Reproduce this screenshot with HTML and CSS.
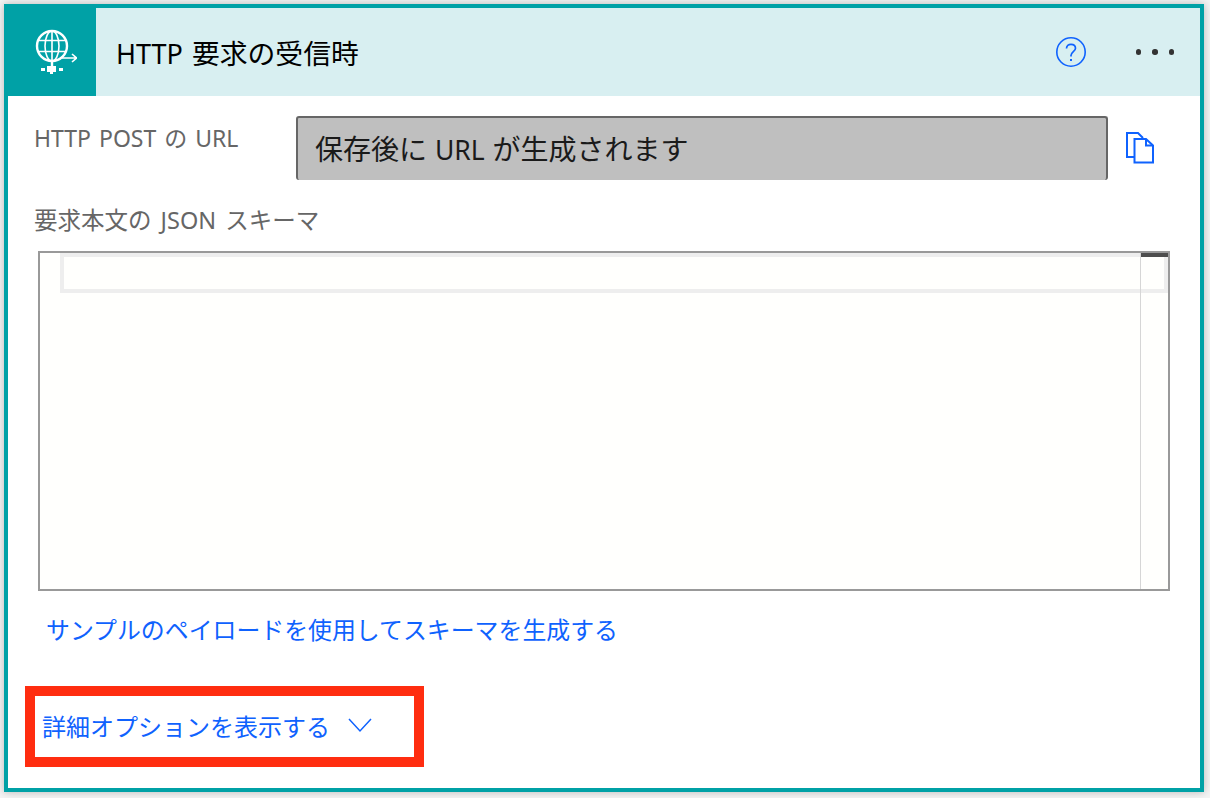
FILE: index.html
```html
<!DOCTYPE html>
<html lang="ja">

<head>
    <meta charset="UTF-8">
    <title>HTTP 要求の受信時</title>
    <link rel="stylesheet" href="styles.css">
</head>

<body>
    <div class="card">
        <div class="card-header">
            <div class="trigger-icon">
                <svg width="50" height="46" viewBox="0 0 50 46" fill="none" stroke="#fff">
                    <circle cx="25" cy="17" r="15" stroke-width="2.4" />
                    <ellipse cx="25" cy="17" rx="7" ry="15" stroke-width="1.6" />
                    <path d="M25 2V32M11 11.500H39M11 22.500H39" stroke-width="1.6" />
                    <path d="M25 32V38" stroke-width="2.4" />
                    <path d="M35 29H49M45 25L49.500 29L45 33" stroke-width="1.6" />
                    <rect x="20" y="37" width="9" height="6" fill="#fff" stroke="none" />
                    <rect x="14" y="39" width="4" height="3" fill="#fff" stroke="none" />
                    <rect x="32" y="39" width="4" height="3" fill="#fff" stroke="none" />
                    <rect x="23" y="43" width="3" height="2" fill="#fff" stroke="none" />
                </svg>
            </div>
            <div class="card-title">HTTP <span class="ja">要求の受信時</span></div>
            <svg class="help-icon" width="32" height="32" viewBox="0 0 32 32" fill="none">
                <circle cx="16" cy="16" r="14.2" stroke="#0f62fe" stroke-width="1.6" />
                <path d="M11.5 12.5C11.5 9.8 13.5 8.3 16 8.3C18.6 8.3 20.5 9.9 20.5 12.2C20.5 15.6 16 15.8 16 19.6V20.5" stroke="#0f62fe" stroke-width="1.7" />
                <rect x="15" y="23" width="2" height="2" fill="#0f62fe" />
            </svg>
            <div class="more-dots"><span></span><span></span><span></span></div>
        </div>

        <div class="card-body">
            <div class="url-row">
                <div class="field-label url-label">HTTP POST の URL</div>
                <div class="url-box"><span class="ja">保存後に</span> URL <span class="ja">が生成されます</span></div>
                <svg class="copy-icon" width="30" height="34" viewBox="0 0 30 34" fill="none" stroke="#0f62fe" stroke-width="2">
                    <path d="M9 26H2V2H13L18 7" />
                    <path d="M9.500 8H21L28 14.500V31.500H9.500Z" />
                    <path d="M21 8V14.500H28" />
                </svg>
            </div>

            <div class="field-label schema-label">要求本文の JSON スキーマ</div>

            <div class="editor">
                <div class="editor-line"></div>
                <div class="editor-ruler"></div>
                <div class="editor-thumb"></div>
            </div>

            <a class="sample-link">サンプルのペイロードを使用してスキーマを生成する</a>

            <div class="advanced-box">
                <span class="advanced-text">詳細オプションを表示する</span>
                <svg width="24" height="15" viewBox="0 0 24 15" fill="none" stroke="#0f62fe" stroke-width="1.500">
                    <path d="M1 1L12 13L23 1" />
                </svg>
            </div>
        </div>
    </div>
</body>

</html>
```

FILE: styles.css
```css
* {
    box-sizing: border-box;
}

body {
    margin: 0;
    width: 1210px;
    height: 798px;
    overflow: hidden;
    padding: 4px 6px 6px 4px;
    background-color: #f4f4f4;
    font-family: "Noto Sans", "Noto Sans CJK JP", sans-serif;
}

.card {
    width: 1200px;
    height: 788px;
    border: 4px solid #00a1a6;
    background-color: #ffffff;
    box-shadow: 0 0 8px rgba(0, 0, 0, 0.25);
}

.card-header {
    display: flex;
    align-items: center;
    height: 88px;
    background-color: #d8eff1;
}

.trigger-icon {
    display: flex;
    align-items: center;
    justify-content: center;
    width: 88px;
    height: 88px;
    background-color: #00a1a6;
}

.card-title {
    flex: 1;
    margin-left: 20px;
    font-size: 27px;
    word-spacing: 2px;
    color: #000000;
}

.card-title .ja {
    font-size: 27.800px;
}

.help-icon {
    margin-right: 49px;
}

.more-dots {
    display: flex;
    gap: 11px;
    margin-right: 26px;
}

.more-dots span {
    width: 5.500px;
    height: 5.500px;
    border-radius: 50%;
    background-color: #333333;
}

.card-body {
    padding-top: 20px;
}

.field-label {
    font-size: 23px;
    color: #666666;
}

.url-row {
    display: flex;
    align-items: flex-start;
    padding-left: 26px;
}

.url-label {
    width: 262px;
    padding-top: 7px;
    word-spacing: 2px;
    line-height: 30px;
}

.url-box {
    width: 812px;
    height: 64px;
    padding-left: 17px;
    border: 2px solid #666666;
    border-bottom-width: 0;
    border-radius: 3px;
    background-color: #bfbfbf;
    font-size: 26.500px;
    word-spacing: 1px;
    line-height: 62px;
    color: #1a1a1a;
}

.url-box .ja {
    font-size: 28px;
}

.copy-icon {
    margin: 15px 0 0 17px;
}

.schema-label {
    margin: 23px 0 0 26px;
    font-size: 23.500px;
    word-spacing: 3px;
    line-height: 34px;
}

.editor {
    position: relative;
    width: 1132px;
    height: 340px;
    margin: 14px 0 0 30px;
    border: 2px solid #999999;
    background-color: #fffffd;
}

.editor-line {
    position: absolute;
    top: 0;
    left: 20px;
    right: 0;
    height: 40px;
    border: 4px solid #eeeeee;
}

.editor-ruler {
    position: absolute;
    top: 0;
    bottom: 0;
    left: 1100px;
    width: 1px;
    background-color: #d6d6d6;
}

.editor-thumb {
    position: absolute;
    top: 0;
    left: 1101px;
    right: 0;
    height: 4px;
    background-color: #4d4d4d;
}

.sample-link {
    display: block;
    margin: 22px 0 0 38px;
    font-size: 23.900px;
    line-height: 34px;
    color: #0f62fe;
}

.advanced-box {
    display: flex;
    align-items: center;
    width: 399px;
    height: 81px;
    margin: 39px 0 0 17px;
    padding: 0 0 2px 7px;
    border: 10px solid #ff2d10;
    background-color: #ffffff;
}

.advanced-text {
    font-size: 24px;
    color: #0f62fe;
}

.advanced-box svg {
    margin-left: 18px;
}
```
